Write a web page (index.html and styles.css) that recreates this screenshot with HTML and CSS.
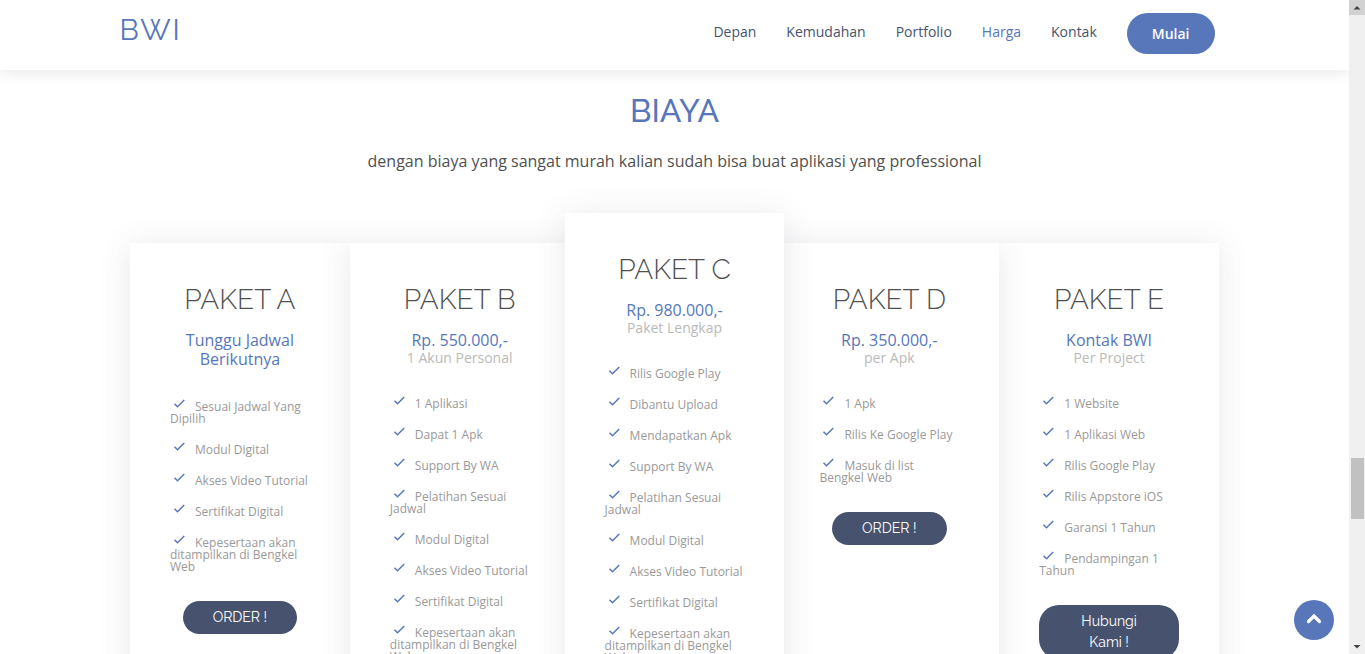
FILE: index.html
```html
<!DOCTYPE html>
<html lang="id">
<head>
<meta charset="utf-8">
<meta name="viewport" content="width=device-width, initial-scale=1">
<title>BWI - Biaya</title>
<link rel="stylesheet" href="styles.css">
</head>
<body>
<svg class="defs" aria-hidden="true">
  <symbol id="check" viewBox="0 0 24 24"><path d="m10 15.586-3.293-3.293-1.414 1.414L10 18.414l9.707-9.707-1.414-1.414z"/></symbol>
</svg>
<div class="page">
  <header class="header">
    <div class="container header-row">
      <a class="logo" href="#">BWI</a>
      <nav class="nav">
        <a href="#depan">Depan</a>
        <a href="#kemudahan">Kemudahan</a>
        <a href="#portfolio">Portfolio</a>
        <a class="active" href="#harga">Harga</a>
        <a href="#kontak">Kontak</a>
        <a class="start" href="#mulai">Mulai</a>
      </nav>
    </div>
  </header>
  <main class="pricing" id="harga">
    <h2 class="title">BIAYA</h2>
    <p class="lead">dengan biaya yang sangat murah kalian sudah bisa buat aplikasi yang professional</p>
    <div class="cards">
      <section class="card">
        <h3>PAKET A</h3>
        <h4>Tunggu Jadwal Berikutnya</h4>
        <ul>
          <li><svg class="check"><use href="#check"/></svg>Sesuai Jadwal Yang Dipilih</li>
          <li><svg class="check"><use href="#check"/></svg>Modul Digital</li>
          <li><svg class="check"><use href="#check"/></svg>Akses Video Tutorial</li>
          <li><svg class="check"><use href="#check"/></svg>Sertifikat Digital</li>
          <li><svg class="check"><use href="#check"/></svg>Kepesertaan akan ditampilkan di Bengkel Web</li>
        </ul>
        <a class="order" href="#order-a">ORDER !</a>
      </section>
      <section class="card raised">
        <h3>PAKET B</h3>
        <h4>Rp. 550.000,-<span>1 Akun Personal</span></h4>
        <ul>
          <li><svg class="check"><use href="#check"/></svg>1 Aplikasi</li>
          <li><svg class="check"><use href="#check"/></svg>Dapat 1 Apk</li>
          <li><svg class="check"><use href="#check"/></svg>Support By WA</li>
          <li><svg class="check"><use href="#check"/></svg>Pelatihan Sesuai Jadwal</li>
          <li><svg class="check"><use href="#check"/></svg>Modul Digital</li>
          <li><svg class="check"><use href="#check"/></svg>Akses Video Tutorial</li>
          <li><svg class="check"><use href="#check"/></svg>Sertifikat Digital</li>
          <li><svg class="check"><use href="#check"/></svg>Kepesertaan akan ditampilkan di Bengkel Web</li>
        </ul>
        <a class="order" href="#order-b">ORDER !</a>
      </section>
      <section class="card featured">
        <h3>PAKET C</h3>
        <h4>Rp. 980.000,-<span>Paket Lengkap</span></h4>
        <ul>
          <li><svg class="check"><use href="#check"/></svg>Rilis Google Play</li>
          <li><svg class="check"><use href="#check"/></svg>Dibantu Upload</li>
          <li><svg class="check"><use href="#check"/></svg>Mendapatkan Apk</li>
          <li><svg class="check"><use href="#check"/></svg>Support By WA</li>
          <li><svg class="check"><use href="#check"/></svg>Pelatihan Sesuai Jadwal</li>
          <li><svg class="check"><use href="#check"/></svg>Modul Digital</li>
          <li><svg class="check"><use href="#check"/></svg>Akses Video Tutorial</li>
          <li><svg class="check"><use href="#check"/></svg>Sertifikat Digital</li>
          <li><svg class="check"><use href="#check"/></svg>Kepesertaan akan ditampilkan di Bengkel Web</li>
        </ul>
        <a class="order" href="#order-c">ORDER !</a>
      </section>
      <section class="card raised">
        <h3>PAKET D</h3>
        <h4>Rp. 350.000,-<span>per Apk</span></h4>
        <ul>
          <li><svg class="check"><use href="#check"/></svg>1 Apk</li>
          <li><svg class="check"><use href="#check"/></svg>Rilis Ke Google Play</li>
          <li><svg class="check"><use href="#check"/></svg>Masuk di list Bengkel Web</li>
        </ul>
        <a class="order" href="#order-d">ORDER !</a>
      </section>
      <section class="card">
        <h3>PAKET E</h3>
        <h4>Kontak BWI<span>Per Project</span></h4>
        <ul>
          <li><svg class="check"><use href="#check"/></svg>1 Website</li>
          <li><svg class="check"><use href="#check"/></svg>1 Aplikasi Web</li>
          <li><svg class="check"><use href="#check"/></svg>Rilis Google Play</li>
          <li><svg class="check"><use href="#check"/></svg>Rilis Appstore iOS</li>
          <li><svg class="check"><use href="#check"/></svg>Garansi 1 Tahun</li>
          <li><svg class="check"><use href="#check"/></svg>Pendampingan 1 Tahun</li>
        </ul>
        <a class="order" href="#kontak">Hubungi Kami !</a>
      </section>
    </div>
  </main>
  <a class="to-top" href="#" aria-label="Kembali ke atas">
    <svg viewBox="0 0 40 40"><path d="m14.500 21.500 5.500-5.500 5.500 5.500" fill="none" stroke="#fff" stroke-width="3.200" stroke-linecap="round"/></svg>
  </a>
</div>
<div class="scrollbar" aria-hidden="true">
  <div class="arrow arrow-up"><svg viewBox="0 0 16 16"><path d="M4.500 9.500h7L8 6z"/></svg></div>
  <div class="track"><div class="thumb"></div></div>
  <div class="arrow"><svg viewBox="0 0 16 16"><path d="M4.500 6h7L8 9.500z"/></svg></div>
</div>
</body>
</html>
```
FILE: styles.css
```css
* { box-sizing: border-box; }

body {
  margin: 0;
  height: 100vh;
  display: flex;
  overflow: hidden;
  background: #fff;
  color: #505050;
  font-family: "Open Sans", sans-serif;
}

a { text-decoration: none; }

.defs { position: absolute; width: 0; height: 0; }

.page {
  flex: 1;
  min-width: 0;
  overflow: hidden;
  position: relative;
}

.container {
  max-width: 1140px;
  margin: 0 auto;
  padding: 0 15px;
}

.header {
  height: 70px;
  background: #fff;
  box-shadow: 0 2px 15px rgba(0, 0, 0, 0.1);
}

.header-row {
  display: flex;
  justify-content: space-between;
  align-items: flex-start;
}

.logo {
  padding-top: 12px;
  font-family: Raleway, Lato, sans-serif;
  font-size: 29px;
  line-height: 36px;
  font-weight: 400;
  letter-spacing: 2px;
  color: #5777ba;
}

.nav {
  display: flex;
  align-items: flex-start;
  gap: 30px;
  padding: 13px 15px 0 0;
  font-size: 14px;
  line-height: 21px;
}

.nav a { color: #47536e; padding-top: 8px; }
.nav .active { color: #5777ba; }

.nav .start {
  padding: 10px 25px;
  border-radius: 50px;
  background: #5777ba;
  color: #fff;
  font-weight: 600;
}

.title {
  margin: 21px 0 18px;
  font-family: Raleway, Lato, sans-serif;
  font-size: 32px;
  line-height: 40px;
  font-weight: 500;
  text-align: center;
  color: #5777ba;
}

.lead {
  margin: 0;
  font-size: 16px;
  line-height: 24px;
  text-align: center;
}

.cards {
  display: flex;
  max-width: 1089px;
  margin: 70px auto 0;
}

.card {
  flex: 1 1 0;
  min-width: 0;
  position: relative;
  padding: 40px;
  background: #fff;
  text-align: center;
  box-shadow: 0 3px 30px rgba(73, 78, 92, 0.13);
}

.card.raised { z-index: 1; }

.card.featured {
  z-index: 2;
  margin: -30px -5px;
}

.card h3 {
  margin: 0 -10px 14px;
  font-family: Raleway, Lato, sans-serif;
  font-size: 28px;
  line-height: 34px;
  font-weight: 300;
  white-space: nowrap;
}

.card h4 {
  margin: 0 0 25px;
  font-size: 16px;
  line-height: 19px;
  font-weight: 400;
  color: #5777ba;
}

.card h4 span {
  display: block;
  font-size: 14px;
  line-height: 16px;
  color: #bababa;
}

.card ul {
  margin: 0 0 16px;
  padding: 0;
  list-style: none;
  font-size: 12px;
  line-height: 12px;
  text-align: left;
  color: #999;
}

.card li { padding-bottom: 12px; }

.check {
  width: 18px;
  height: 18px;
  margin-right: 7px;
  vertical-align: -1px;
  fill: #5777ba;
}

.order {
  display: inline-block;
  padding: 6px 30px;
  border-radius: 20px;
  background: #47536e;
  color: #fff;
  font-family: Raleway, Lato, sans-serif;
  font-size: 14px;
  line-height: 21px;
}

.to-top {
  position: absolute;
  right: 15px;
  bottom: 14px;
  z-index: 3;
  width: 40px;
  height: 40px;
  border-radius: 50%;
  background: #5777ba;
}

.scrollbar {
  flex: none;
  width: 16px;
  display: flex;
  flex-direction: column;
  background: #f0f0f0;
}

.arrow { height: 15px; }
.arrow svg { display: block; width: 16px; height: 16px; fill: #444; }
.arrow-up { background: #d2d2d2; }

.track { flex: 1; padding: 0 1px 0 2px; }
.track::before { content: ""; display: block; height: 71%; }
.thumb { height: 61px; background: #c1c1c1; }
```
